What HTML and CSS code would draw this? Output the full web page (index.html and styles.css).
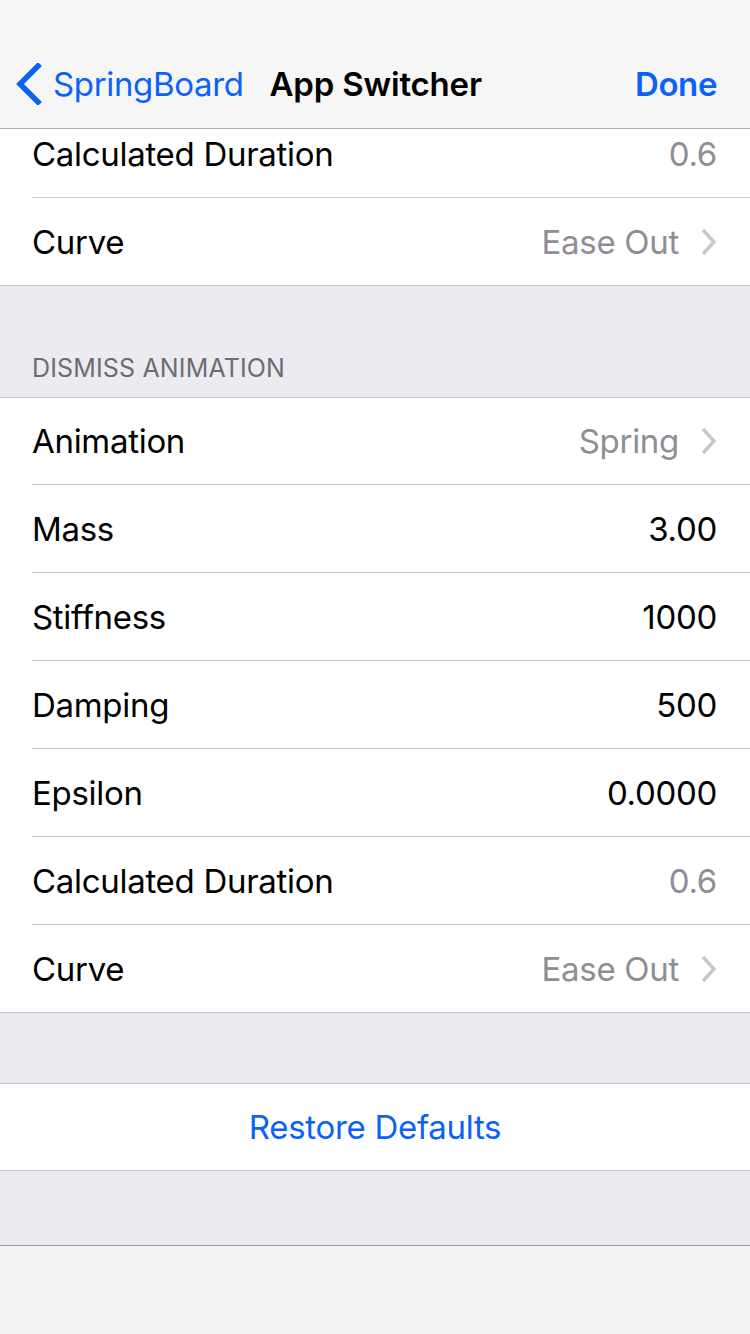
FILE: index.html
```html
<!DOCTYPE html>
<html>
<head>
<meta charset="utf-8">
<link rel="stylesheet" href="styles.css">
</head>
<body>
<div class="screen">
  <header class="nav">
    <div class="nav-left">
      <svg class="back-chev" width="28" height="42" viewBox="0 0 28 42"><path d="M23 3 L5 21 L23 39" fill="none" stroke="#0a63f6" stroke-width="5.5" stroke-linecap="square"/></svg>
      <span class="back-label">SpringBoard</span>
    </div>
    <div class="nav-title">App Switcher</div>
    <div class="nav-done">Done</div>
  </header>
  <main class="viewport">
    <div class="content">
      <section class="group">
        <div class="row"><span class="label">Calculated Duration</span><span class="value muted">0.6</span></div>
        <div class="row"><span class="label">Curve</span><span class="value muted">Ease Out<svg class="chev" width="16" height="28" viewBox="0 0 16 28"><path d="M2 2 L13 14 L2 26" fill="none" stroke="#c7c7cc" stroke-width="3.4"/></svg></span></div>
      </section>
      <div class="header-gap"><span class="section-title">DISMISS ANIMATION</span></div>
      <section class="group group-main">
        <div class="row"><span class="label">Animation</span><span class="value muted">Spring<svg class="chev" width="16" height="28" viewBox="0 0 16 28"><path d="M2 2 L13 14 L2 26" fill="none" stroke="#c7c7cc" stroke-width="3.4"/></svg></span></div>
        <div class="row"><span class="label">Mass</span><span class="value">3.00</span></div>
        <div class="row"><span class="label">Stiffness</span><span class="value">1000</span></div>
        <div class="row"><span class="label">Damping</span><span class="value">500</span></div>
        <div class="row"><span class="label">Epsilon</span><span class="value">0.0000</span></div>
        <div class="row"><span class="label">Calculated Duration</span><span class="value muted">0.6</span></div>
        <div class="row"><span class="label">Curve</span><span class="value muted">Ease Out<svg class="chev" width="16" height="28" viewBox="0 0 16 28"><path d="M2 2 L13 14 L2 26" fill="none" stroke="#c7c7cc" stroke-width="3.4"/></svg></span></div>
      </section>
      <div class="gap"></div>
      <section class="group">
        <div class="row button-row"><span class="restore">Restore Defaults</span></div>
      </section>
      <div class="gap gap-bottom"></div>
    </div>
  </main>
  <footer class="toolbar"></footer>
</div>
</body>
</html>
```
FILE: styles.css
```css
* { box-sizing: border-box; }
html, body { margin: 0; padding: 0; }
body {
  width: 750px;
  height: 1334px;
  overflow: hidden;
  font-family: "Inter", "Liberation Sans", sans-serif;
  background: #ebebf1;
  color: #000;
}
.screen {
  display: flex;
  flex-direction: column;
  height: 1334px;
}
.nav {
  height: 129px;
  flex: none;
  background: #f6f6f6;
  border-bottom: 1px solid #b2b2b2;
  display: flex;
  align-items: flex-end;
  padding: 0 33px 23px 0;
  position: relative;
  z-index: 2;
}
.nav-left {
  display: flex;
  align-items: center;
  color: #0a63f6;
  font-size: 33px;
  letter-spacing: -0.35px;
}
.back-chev {
  margin: 0 10px 0 15px;
}
.back-label { line-height: 42px; }
.nav-title {
  margin-left: 26px;
  font-size: 33px;
  font-weight: 600;
  letter-spacing: -0.2px;
  line-height: 42px;
}
.nav-done {
  margin-left: auto;
  color: #0a63f6;
  font-size: 33px;
  font-weight: 600;
  letter-spacing: -0.4px;
  line-height: 42px;
}
.viewport {
  flex: 1;
  overflow: hidden;
}
.content {
  margin-top: -19px;
}
.group {
  background: #fff;
  border-bottom: 1px solid #c8c7cc;
}
.header-gap + .group,
.gap + .group {
  border-top: 1px solid #c8c7cc;
}
.row {
  height: 88px;
  margin-left: 32px;
  padding-right: 33px;
  display: flex;
  align-items: center;
  justify-content: space-between;
  border-bottom: 1px solid #c8c7cc;
  font-size: 33px;
  letter-spacing: -0.3px;
}
.row:last-child {
  border-bottom: none;
  height: 87px;
}
.group-main .row:first-child { height: 87px; }
.value { display: flex; align-items: center; }
.muted { color: #8e8e93; }
.chev { margin-left: 22px; }
.header-gap {
  height: 111px;
  padding: 0 32px 14px;
  display: flex;
  align-items: flex-end;
  font-size: 25px;
  letter-spacing: 0.15px;
  color: #6d6d72;
}
.gap { height: 70px; }
.gap-bottom { height: 75px; border-bottom: 1px solid #9c9ca0; }
.button-row {
  margin-left: 0;
  padding-right: 0;
  justify-content: center;
}
.row.button-row { height: 86px; }
.restore { color: #0a63f6; }
.toolbar {
  height: 88px;
  flex: none;
  background: #f3f3f5;
}
```
